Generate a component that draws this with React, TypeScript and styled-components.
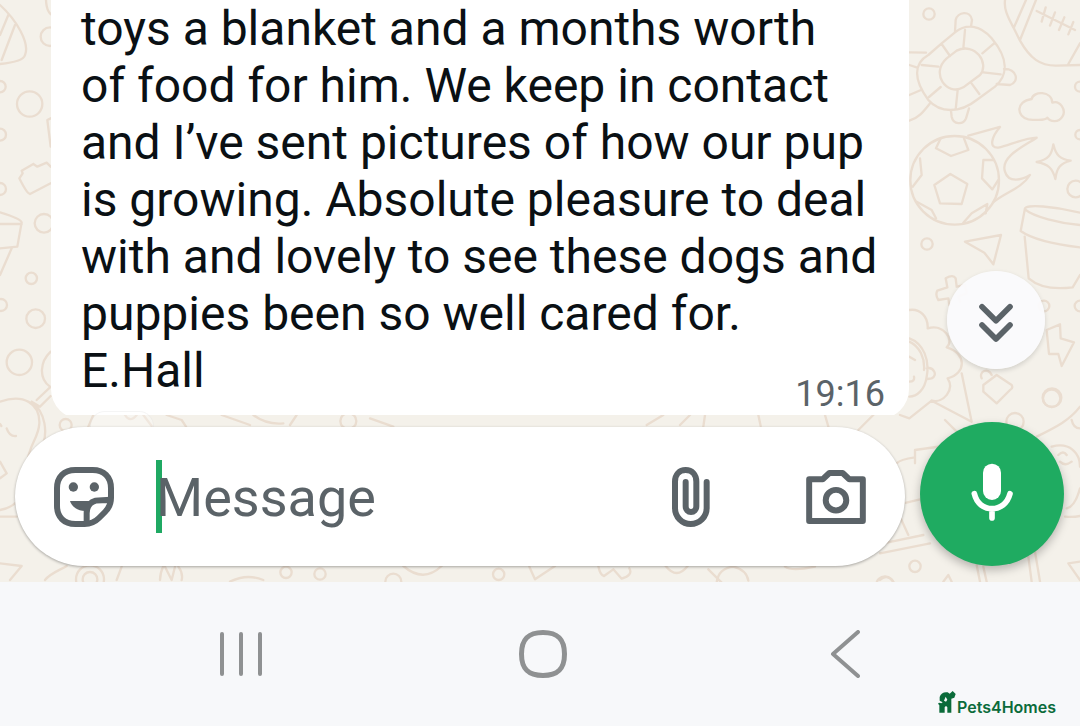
import React from "react";
import styled, { createGlobalStyle } from "styled-components";

const GlobalStyle = createGlobalStyle`
  * { box-sizing: border-box; }
  body { margin: 0; background: #f7f8fa; font-family: Roboto, sans-serif; }
  svg { display: block; }
`;

const Screen = styled.div`
  display: flex;
  flex-direction: column;
  min-height: 100vh;
`;

const Chat = styled.main`
  position: relative;
  isolation: isolate;
  overflow: hidden;
  background: #f4f1ea;
`;

const WallpaperSvg = styled.svg`
  position: absolute;
  inset: 0;
  z-index: -1;
  width: 100%;
  height: 100%;
  fill: none;
  stroke: #eaddd0;
  stroke-width: 7;
  stroke-linecap: round;
  stroke-linejoin: round;
`;

const Messages = styled.section`
  position: relative;
  height: 415px;
  overflow: hidden;
  padding: 0 171px 0 51px;
`;

const Bubble = styled.article`
  background: #fff;
  border-radius: 0 0 30px 30px;
  padding: 0 24px 4px 30px;
`;

const MessageText = styled.p`
  margin: 0;
  color: #0a1014;
  font-size: 48px;
  line-height: 57px;
  white-space: pre;
`;

const LastLine = styled.div`
  display: flex;
  justify-content: space-between;
  height: 73px;
`;

const Time = styled.time`
  align-self: flex-end;
  color: #5b6368;
  font-size: 36px;
  line-height: 42px;
`;

const IconButton = styled.button`
  display: flex;
  flex: none;
  align-items: center;
  justify-content: center;
  padding: 0;
  border: 0;
  background: none;
  color: inherit;
  cursor: pointer;
`;

const ScrollButton = styled(IconButton)`
  position: absolute;
  right: 35px;
  bottom: 46px;
  width: 98px;
  height: 98px;
  border-radius: 50%;
  background: rgba(250, 250, 252, 0.96);
  box-shadow: 0 2px 5px rgba(0, 0, 0, 0.14);
  color: #5b6368;
`;

const DatePill = styled.span`
  position: absolute;
  left: 90px;
  top: 411px;
  width: 64px;
  height: 30px;
  border-radius: 30px;
  border: 1px solid rgba(0, 0, 0, 0.04);
  background: rgba(255, 255, 255, 0.3);
`;

const Composer = styled.form`
  position: relative;
  display: flex;
  align-items: flex-end;
  gap: 15px;
  padding: 7px 16px 16px 15px;
`;

const Field = styled.div`
  display: flex;
  align-items: center;
  flex: 1;
  min-width: 0;
  height: 139px;
  padding: 0 39px;
  border-radius: 70px;
  background: #fff;
  box-shadow: 0 1px 3px rgba(0, 0, 0, 0.32);
  color: #5b6368;
`;

const MessageInput = styled.input`
  flex: 1;
  min-width: 0;
  height: 73px;
  margin: 0 42px;
  padding: 2px 0 0;
  border: 0;
  outline: 0;
  border-radius: 0;
  background: linear-gradient(#1fa963, #1fa963) left / 6px 100% no-repeat;
  caret-color: transparent;
  color: #0a1014;
  font-family: Roboto, sans-serif;
  font-size: 54px;
  &::placeholder { color: #5b6368; opacity: 1; }
`;

const FieldActions = styled.div`
  display: flex;
  align-items: center;
  gap: 96px;
`;

const MicButton = styled(IconButton)`
  width: 144px;
  height: 144px;
  border-radius: 50%;
  background: #1fab61;
  box-shadow: 0 4px 10px rgba(0, 0, 0, 0.26);
  color: #fff;
`;

const SystemNav = styled.nav`
  position: relative;
  display: grid;
  grid-template-columns: repeat(3, 1fr);
  align-items: center;
  justify-items: center;
  flex: 1;
  min-height: 144px;
  padding: 0 84px 0 90px;
  background: #f7f8fa;
  color: #8f9192;
`;

const Brand = styled.a`
  position: absolute;
  right: 24px;
  bottom: 9px;
  display: flex;
  align-items: flex-end;
  color: #0b6b3a;
  font-family: Inter, sans-serif;
  font-size: 16px;
  font-weight: 600;
  line-height: 20px;
  text-decoration: none;
`;

const BrandMark = styled.svg`
  margin: 0 1px 4px 0;
  fill: currentColor;
`;

const LineIcon = styled.svg<{ $weight?: number }>`
  fill: none;
  stroke: currentColor;
  stroke-width: ${(p) => p.$weight ?? 18};
  stroke-linecap: round;
  stroke-linejoin: round;
`;

const message = `toys a blanket and a months worth
of food for him. We keep in contact
and I’ve sent pictures of how our pup
is growing. Absolute pleasure to deal
with and lovely to see these dogs and
puppies been so well cared for.`;

type Doodle = { x: number; y: number; paths: string; dots: [number, number, number][] };

// Each doodle cluster is drawn on a grid three times finer than the screen.
const doodles: Doodle[] = [
  {
    x: 900, y: 0,
    paths:
      "M125 130L165 97C200 70 240 75 275 115C325 175 325 225 285 260L230 300C180 340 120 340 85 300C40 240 40 190 85 165Z" +
      "M140 175L170 152C225 125 270 190 240 225L190 262C140 290 90 220 140 175" +
      "M195 90L190 145M125 132L150 168M285 128L247 160M302 223L250 217M238 282L213 248M167 328L173 270M87 291L122 261M65 195L115 200" +
      "M165 95L167 60C172 35 212 30 216 60L213 80M312 207C350 205 360 245 330 255L290 252M207 325L198 355C190 375 160 375 155 350L153 332" +
      "M28 157L78 158M28 195L52 203M28 285L63 270M90 310C70 335 55 355 28 362" +
      "M315 0C312 25 320 45 340 82L360 122C390 175 420 198 470 197L540 195M378 0L342 82M408 0L360 120M540 130L505 192" +
      "M410 33L525 90M437 22L425 65M465 37L450 77M493 52L477 90M520 66L505 103" +
      "M385 358C350 350 345 305 395 297C400 272 455 272 457 308C480 300 500 330 487 350C475 370 450 365 442 353C435 362 400 360 385 358Z" +
      "M460 433C467 465 480 478 512 482C480 490 470 505 466 537C458 505 445 492 410 486C445 478 455 465 460 433Z" +
      "M151 522L202 552L185 612L120 610L103 555ZM122 415L108 445L153 468L205 450L192 415M280 480L250 480L246 535L277 568L295 540" +
      "M60 475L65 525L38 560M50 605L95 630L108 655M190 668L215 640L262 612L257 640" +
      "M205 407L300 381C275 410 265 445 295 443C330 435 370 415 410 413C370 440 300 470 315 515C325 550 365 540 390 525C365 565 320 575 282 605" +
      "M375 628C370 610 470 620 540 638M375 628C400 650 480 670 540 675M375 625L362 693C400 720 480 735 540 742",
    dots: [[87, 42, 17], [540, 260, 15], [540, 404, 14], [527, 567, 25], [164, 541, 133]],
  },
  {
    x: 900, y: 230,
    paths:
      "M195 35L303 15L280 103L253 68ZM374 20L386 145C420 175 470 178 518 172L540 135" +
      "M175 200L180 215M175 200L200 190L195 165L170 170L167 145Q160 132 137 145L142 172L112 182Q105 195 115 210L145 205L148 225" +
      "M28 240C60 235 85 260 83 295C130 280 165 330 140 352C200 370 200 430 143 445C165 480 130 520 95 512" +
      "M28 325C70 340 90 390 80 440C75 480 50 500 28 500M28 335C60 350 75 385 72 420M80 415C100 410 115 435 95 445L82 447M28 380L45 390M28 455Q45 455 42 440" +
      "M440 300L480 283L482 325L522 337L485 408L475 372L447 372Z" +
      "M290 435L335 465Q340 475 330 480L290 520L250 485L250 465ZM245 445C235 425 265 410 275 435",
    dots: [[81, 42, 17], [432, 228, 16], [540, 228, 16], [456, 503, 28]],
  },
  {
    x: 0, y: 0,
    paths:
      "M0 15C50 60 90 130 75 165C70 185 20 190 0 192M25 45L0 105M45 75L5 180M138 0Q140 45 165 48M152 355L142 360L152 440" +
      "M100 492L112 500L140 488L152 500M152 550L90 582Q80 580 58 535L68 520L65 512L100 492" +
      "M0 637Q60 655 65 667L52 740L0 745M0 672L65 672M35 745L0 825",
    dots: [[150, 110, 28], [0, 260, 17], [0, 404, 18], [89, 312, 38], [0, 567, 18], [132, 670, 28], [94, 835, 17]],
  },
  {
    x: 0, y: 290,
    paths:
      "M152 185C120 215 115 265 150 290M150 292L110 330M152 318L120 350M95 335L120 350" +
      "M0 335C70 310 120 340 118 400C115 450 85 460 80 530M95 335C140 370 140 430 130 460M20 415Q28 440 48 438M0 402L4 408M0 515L20 550L0 565M0 680L50 680M0 660C30 655 50 640 65 620" +
      "M265 410L280 375M375 375Q390 400 410 375M430 375L455 408M500 375L545 390L558 410" +
      "M0 820L65 828L30 870M135 870C150 850 180 840 200 828M350 870L365 830M480 870Q480 850 490 828M495 830L515 870L525 830M545 870Q550 850 535 830",
    dots: [[3, 45, 18], [107, 86, 28], [58, 217, 38], [197, 405, 18], [270, 868, 42], [270, 868, 22]],
  },
  {
    x: 0, y: 405,
    paths: "M665 30L750 60M760 30Q800 60 850 55M890 30L870 60M1110 40L1180 65M690 530Q740 505 790 525",
    dots: [[1045, 48, 24], [858, 502, 17], [960, 507, 17], [1180, 530, 24]],
  },
  {
    x: 400, y: 560,
    paths:
      "M10 18Q70 70 125 18M388 20L405 58L465 18M595 18Q600 45 612 48L640 28L665 56Q700 45 688 25M797 18Q830 60 863 18" +
      "M925 28L965 68M950 68Q955 25 1000 20Q1040 30 1045 62M1155 20Q1175 35 1245 20",
    dots: [[296, 43, 17], [1455, 75, 26]],
  },
  {
    x: 640, y: 400,
    paths: "M20 75L70 45M120 75L150 45M190 80L195 45M355 45L362 78M555 45L565 80M655 90L700 45",
    dots: [],
  },
  {
    x: 880, y: 400,
    paths:
      "M60 45L88 55L155 2L275 65L245 -80M195 60Q215 80 230 95M105 190L105 150L190 138M50 190Q60 178 105 172M70 310L120 298M60 350L85 405M20 428L130 405M0 460L150 430" +
      "M0 540Q20 520 40 545M190 545L205 525L215 545M290 495L300 545M310 500L320 545M445 470L455 545M465 455L480 545M600 485L565 490L600 540" +
      "M470 110C530 80 570 60 600 20M515 140C570 125 600 160 600 200M535 165Q550 150 560 165M540 185Q555 200 575 185M555 350Q580 352 600 348M600 265Q585 320 560 325M575 60Q580 85 600 85",
    dots: [[105, 499, 17], [405, 65, 26], [515, -5, 26]],
  },
];

const Wallpaper = () => (
  <WallpaperSvg viewBox="0 0 1080 582" preserveAspectRatio="xMaxYMin slice" aria-hidden="true">
    {doodles.map((d, i) => (
      <g key={i} transform={`translate(${d.x} ${d.y}) scale(0.33333)`}>
        <path d={d.paths} />
        {d.dots.map(([cx, cy, r]) => (
          <circle key={`${cx}-${cy}-${r}`} cx={cx} cy={cy} r={r} />
        ))}
      </g>
    ))}
  </WallpaperSvg>
);

const StickerIcon = () => (
  <LineIcon width="60" height="60" viewBox="0 0 180 180">
    <path d="M64 9H116C150 9 171 30 171 64V92C171 113 164 124 153 135L135 153C124 164 113 171 92 171H64C30 171 9 150 9 116V64C9 30 30 9 64 9Z" />
    <path d="M168 98C150 101 139 98 125 101C104 107 98 121 98 139V168" />
    <path d="M48 102H124L98 132C76 134 54 122 48 102Z" fill="currentColor" stroke="none" />
    <circle cx="58" cy="60" r="14" fill="currentColor" stroke="none" />
    <circle cx="121" cy="60" r="14" fill="currentColor" stroke="none" />
  </LineIcon>
);

const ClipIcon = () => (
  <LineIcon width="38" height="60" viewBox="0 0 114 180">
    <path d="M104 45V123C104 150 82 171 56 171C30 171 9 150 9 123V44C9 23 22 9 41 9C60 9 73 23 73 44V118C73 128 66 135 57 135C48 135 41 128 41 118V45" />
  </LineIcon>
);

const CameraIcon = () => (
  <LineIcon width="60" height="54" viewBox="0 0 180 163">
    <path d="M9 28H50L70 9H110L130 28H171V154H9Z" />
    <circle cx="90" cy="91" r="31" />
  </LineIcon>
);

const MicIcon = () => (
  <LineIcon width="42" height="64" viewBox="183 186 126 192" $weight={17}>
    <rect x="219" y="191" width="54" height="109" rx="27" fill="currentColor" stroke="none" />
    <path d="M193 281C200 311 222 326 246 326C270 326 292 311 300 281M246 326V354" />
  </LineIcon>
);

export default function App() {
  return (
    <>
      <GlobalStyle />
      <Screen>
        <Chat>
          <Wallpaper />
          <Messages>
            <Bubble>
              <MessageText>{message}</MessageText>
              <LastLine>
                <MessageText>E.Hall</MessageText>
                <Time>19:16</Time>
              </LastLine>
            </Bubble>
            <ScrollButton type="button" aria-label="Scroll to latest">
              <LineIcon width="36" height="50" viewBox="234 195 108 150" $weight={17}>
                <path d="M246 230L288 272L330 230M246 285L288 327L330 285" />
              </LineIcon>
            </ScrollButton>
          </Messages>
          <DatePill />
          <Composer onSubmit={(e) => e.preventDefault()}>
            <Field>
              <IconButton type="button" aria-label="Stickers"><StickerIcon /></IconButton>
              <MessageInput type="text" placeholder="Message" aria-label="Message" />
              <FieldActions>
                <IconButton type="button" aria-label="Attach"><ClipIcon /></IconButton>
                <IconButton type="button" aria-label="Camera"><CameraIcon /></IconButton>
              </FieldActions>
            </Field>
            <MicButton type="button" aria-label="Record voice message"><MicIcon /></MicButton>
          </Composer>
        </Chat>
        <SystemNav aria-label="System navigation">
          <IconButton type="button" aria-label="Recent apps">
            <LineIcon width="44" height="48" viewBox="0 0 44 48" $weight={4}>
              <path d="M3 4V44M22 4V44M41 4V44" />
            </LineIcon>
          </IconButton>
          <IconButton type="button" aria-label="Home">
            <LineIcon width="48" height="48" viewBox="0 0 48 48" $weight={5}>
              <path d="M24 2.5C39 2.5 45.5 9 45.5 24S39 45.5 24 45.5S2.5 39 2.5 24S9 2.5 24 2.5Z" />
            </LineIcon>
          </IconButton>
          <IconButton type="button" aria-label="Back">
            <LineIcon width="30" height="48" viewBox="0 0 30 48" $weight={4}>
              <path d="M28 2L3 24L28 46" />
            </LineIcon>
          </IconButton>
          <Brand href="#">
            <BrandMark width="18" height="22" viewBox="0 0 54 66" aria-hidden="true">
              <path d="M44 0L53 9L49 20L40 23V65H28V50C28 44 20 44 20 50V65H4V43L0 38L3 35L10 37L14 34L5 29V18C8 7 18 2 29 4L35 8ZM23 17L18 29L24 32L28 26Z" fillRule="evenodd" />
            </BrandMark>
            Pets4Homes
          </Brand>
        </SystemNav>
      </Screen>
    </>
  );
}
